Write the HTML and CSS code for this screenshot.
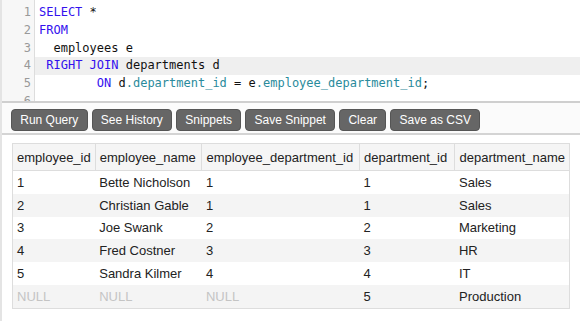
FILE: index.html
```html
<!DOCTYPE html>
<html>
	<head>
		<meta charset="utf-8">
		<title>SQL</title>
		<link rel="stylesheet" href="styles.css">
	</head>
	<body>
		<div class="editor">
			<div class="gutter">
				<div>1</div>
				<div>2</div>
				<div>3</div>
				<div>4</div>
				<div>5</div>
				<div>6</div>
			</div>
			<div class="code">
				<div class="line"><span class="kw">SELECT</span> *</div>
				<div class="line"><span class="kw">FROM</span></div>
				<div class="line">  employees e</div>
				<div class="line active"> <span class="kw">RIGHT JOIN</span> departments d</div>
				<div class="line">        <span class="kw">ON</span> d<span class="prop">.department_id</span> = e<span class="prop">.employee_department_id</span>;</div>
			</div>
		</div>
		<div class="toolbar">
			<button>Run Query</button>
			<button>See History</button>
			<button>Snippets</button>
			<button>Save Snippet</button>
			<button>Clear</button>
			<button>Save as CSV</button>
		</div>
		<div class="results">
			<table>
				<thead>
					<tr>
						<th class="c1">employee_id</th>
						<th class="c2">employee_name</th>
						<th class="c3">employee_department_id</th>
						<th class="c4">department_id</th>
						<th class="c5">department_name</th>
					</tr>
				</thead>
				<tbody>
					<tr><td>1</td><td>Bette Nicholson</td><td>1</td><td>1</td><td>Sales</td></tr>
					<tr><td>2</td><td>Christian Gable</td><td>1</td><td>1</td><td>Sales</td></tr>
					<tr><td>3</td><td>Joe Swank</td><td>2</td><td>2</td><td>Marketing</td></tr>
					<tr><td>4</td><td>Fred Costner</td><td>3</td><td>3</td><td>HR</td></tr>
					<tr><td>5</td><td>Sandra Kilmer</td><td>4</td><td>4</td><td>IT</td></tr>
					<tr><td class="null">NULL</td><td class="null">NULL</td><td class="null">NULL</td><td>5</td><td>Production</td></tr>
				</tbody>
			</table>
		</div>
	</body>
</html>
```

FILE: styles.css
```css
body {
	margin: 0;
	height: 321px;
	overflow: hidden;
	font-family: "Liberation Sans", Arial, sans-serif;
	color: #222;
	background: #fff;
	border-left: 2px solid #e4e4e4;
}

.editor {
	display: flex;
	height: 103px;
	overflow: hidden;
	border-bottom: 2px solid #cfcfcf;
	font-family: "DejaVu Sans Mono", monospace;
	font-size: 12px;
	line-height: 17.75px;
	box-sizing: border-box;
}

.gutter {
	width: 29px;
	flex: none;
	text-align: right;
	padding: 4px 3px 0 0;
	color: #999;
	background: #f7f7f7;
	border-right: 1px solid #ddd;
}

.code {
	flex: 1;
	padding-top: 4px;
}

.line {
	white-space: pre;
	padding-left: 4px;
	color: #111;
}

.line.active {
	background: #efefef;
}

.kw {
	color: #3311ee;
}

.prop {
	color: #2a8b9c;
}

.toolbar {
	display: flex;
	gap: 4px;
	padding: 6px 0 2px 9px;
	border-bottom: 2px solid #d4d4d4;
	background: #fbfbfb;
}

.toolbar button {
	font-family: "Liberation Sans", Arial, sans-serif;
	font-size: 12px;
	color: #fff;
	background: #666;
	border: 1px solid #555;
	border-radius: 4px;
	height: 22px;
	padding: 0 8.25px;
}

.results {
	padding: 8px 0 0 10px;
}

table {
	border-collapse: collapse;
	border: 1px solid #ddd;
	font-size: 13px;
	width: 558px;
}

th {
	font-weight: normal;
	text-align: left;
	background: #f5f5f5;
	border: 1px solid #ddd;
	height: 26px;
	padding: 0 4px;
	white-space: nowrap;
}

td {
	height: 22.8px;
	padding: 0 4px;
	white-space: nowrap;
}

tbody tr:nth-child(even) {
	background: #f4f4f4;
}

.c1 { width: 73px; }
.c2 { width: 98px; }
.c3 { width: 149px; }
.c4 { width: 87px; }

.null {
	color: #c4c4c4;
}
```
